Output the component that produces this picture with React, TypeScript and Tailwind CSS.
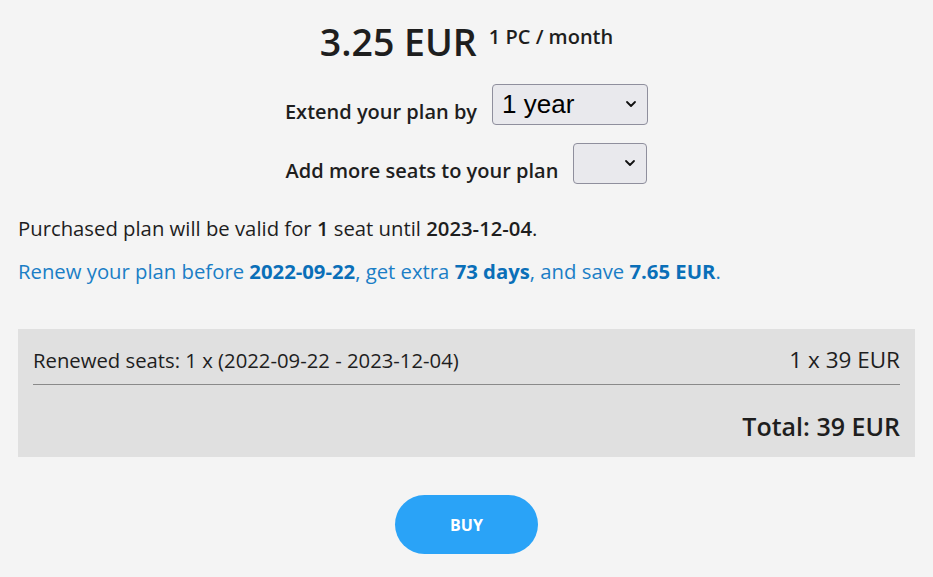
import React from "react";

function Chevron() {
  return (
    <svg width="12" height="8" viewBox="0 0 12 8" className="absolute right-[10px] top-1/2 -translate-y-1/2">
      <path d="M2 2 L6 6 L10 2" fill="none" stroke="#111" strokeWidth="1.8" strokeLinecap="round" strokeLinejoin="round" />
    </svg>
  );
}

export default function App() {
  return (
    <div className="min-h-[577px] w-[933px] bg-[#f4f4f4] text-[#1e1e1e] px-[18px]" style={{ fontFamily: '"Open Sans", "Noto Sans", sans-serif' }}>
      <div className="flex justify-center items-start pt-[19px]">
        <div className="text-[37.5px] font-semibold leading-[46px]">3.25 EUR</div>
        <div className="text-[20px] font-semibold leading-[22px] ml-[12px] mt-[7px]">1 PC / month</div>
      </div>
      <div className="flex justify-center items-center mt-[18px]">
        <span className="text-[20px] font-semibold mt-[16px] leading-[26px]">Extend your plan by</span>
        <div className="relative ml-[15px] w-[156px] h-[41px] rounded-[4px] border border-[#8f8f9d] bg-[#e9e9ed]">
          <span className="absolute left-[9px] top-[2px] text-[26px] text-black leading-[34px]" style={{ fontFamily: '"Liberation Sans", Arial, sans-serif' }}>1 year</span>
          <Chevron />
        </div>
      </div>
      <div className="flex justify-center items-center mt-[17px]">
        <span className="text-[20px] font-semibold mt-[16px] leading-[26px]">Add more seats to your plan</span>
        <div className="relative ml-[15px] w-[74px] h-[41px] rounded-[4px] border border-[#8f8f9d] bg-[#e9e9ed]">
          <Chevron />
        </div>
      </div>
      <p className="text-[20.3px] mt-[31px] leading-[26px]">
        Purchased plan will be valid for <b className="font-semibold">1</b> seat until <b className="font-semibold">2023-12-04</b>.
      </p>
      <p className="text-[20.3px] mt-[17px] leading-[26px] text-[#1a7ec6]">
        Renew your plan before <b className="text-[#0a6fb8] font-bold">2022-09-22</b>, get extra <b className="text-[#0a6fb8] font-bold">73 days</b>, and save <b className="text-[#0a6fb8] font-bold">7.65 EUR</b>.
      </p>
      <div className="mt-[45px] bg-[#e0e0e0] px-[15px] pt-[17px] pb-[15px]">
        <div className="flex justify-between items-baseline pb-[10px] border-b border-[#8a8a8a] leading-[28px]">
          <span className="text-[20.3px]">Renewed seats: 1 x (2022-09-22 - 2023-12-04)</span>
          <span className="text-[22.5px]">1 x 39 EUR</span>
        </div>
        <div className="flex justify-end mt-[25px]">
          <span className="text-[25px] font-semibold leading-[32px]">Total: 39 EUR</span>
        </div>
      </div>
      <div className="flex justify-center mt-[38px]">
        <button className="w-[143px] h-[59px] rounded-full bg-[#2aa3f7] text-white text-[16px] font-bold">BUY</button>
      </div>
    </div>
  );
}
